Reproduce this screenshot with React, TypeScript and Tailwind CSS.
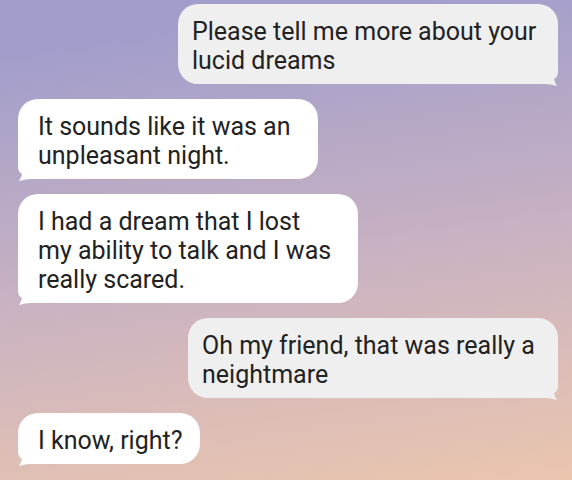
const messages = [
  { side: 'right', lines: ['Please tell me more about your', 'lucid dreams'], width: 'w-[380px]' },
  { side: 'left', lines: ['It sounds like it was an', 'unpleasant night.'], width: 'w-[300px]' },
  { side: 'left', lines: ['I had a dream that I lost', 'my ability to talk and I was', 'really scared.'], width: 'w-[340px]' },
  { side: 'right', lines: ['Oh my friend, that was really a', 'neightmare'], width: 'w-[370px]' },
  { side: 'left', lines: ['I know, right?'], width: 'w-[182px]' },
];

function Tail({ side, fill }: { side: string; fill: string }) {
  return (
    <svg
      width="20"
      height="22"
      viewBox="0 0 20 22"
      className={
        side === 'left'
          ? 'absolute left-0 bottom-[-2px]'
          : 'absolute right-0 bottom-[-2px] -scale-x-100'
      }
    >
      <path d="M0 0 L0 8 Q0 13 4 15 Q3 19 1 22 Q8 20 12 20 Q16 20 20 20 L20 0 Z" fill={fill} />
    </svg>
  );
}

export default function App() {
  return (
    <div
      className="h-[480px] w-[572px] overflow-hidden bg-linear-[172deg] from-[#a29ecb] from-10% via-[#c9b2c2] via-55% to-[#ebc6ae]"
      style={{ fontFamily: 'Roboto, "Liberation Sans", sans-serif' }}
    >
      <div className="flex flex-col gap-[15px] pt-[4px] pl-[18px] pr-[14px]">
        {messages.map((m, i) => {
          const right = m.side === 'right';
          return (
            <div key={i} className={right ? 'flex justify-end' : 'flex justify-start'}>
              <div
                className={`relative ${m.width} rounded-[20px] pt-[13px] pb-[9px] text-[25px] leading-[29px] text-[#222222] ${
                  right ? 'bg-[#efefef] pl-[14px]' : 'bg-white pl-[20px]'
                }`}
              >
                <Tail side={m.side} fill={right ? '#efefef' : '#ffffff'} />
                {m.lines.map((line) => (
                  <div key={line} className="relative whitespace-nowrap">
                    {line}
                  </div>
                ))}
              </div>
            </div>
          );
        })}
      </div>
    </div>
  );
}
